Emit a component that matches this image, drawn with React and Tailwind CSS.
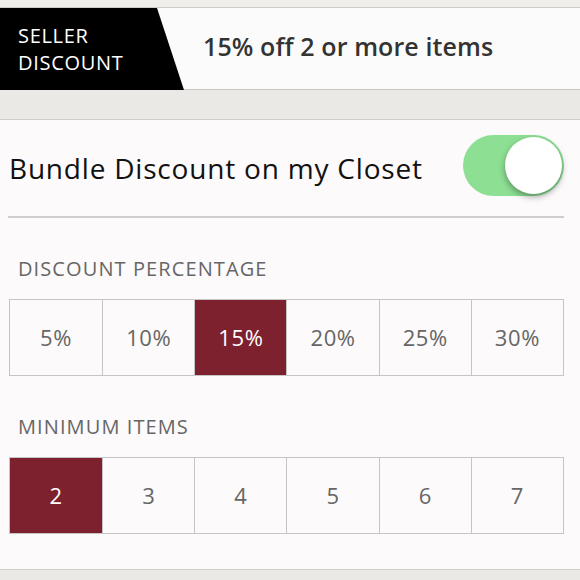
import React, { useState } from 'react';

const percents = ['5%', '10%', '15%', '20%', '25%', '30%'];
const minimums = ['2', '3', '4', '5', '6', '7'];

function OptionRow({ options, selected, onSelect }) {
  return (
    <div className="ml-[9px] mr-[16px] grid grid-cols-6 border border-[#c6c4c4]">
      {options.map((o, i) => (
        <button
          key={o}
          onClick={() => onSelect(o)}
          className={`h-[75px] flex items-center justify-center text-[22px] tracking-[0.6px] ${i > 0 ? 'border-l border-[#c6c4c4]' : ''} ${
            selected === o ? 'bg-[#7d212e] text-white' : 'bg-[#fcfafa] text-[#666]'
          }`}
        >
          {o}
        </button>
      ))}
    </div>
  );
}

export default function App() {
  const [enabled, setEnabled] = useState(true);
  const [percent, setPercent] = useState('15%');
  const [minItems, setMinItems] = useState('2');

  return (
    <div className="w-[580px] h-[580px] overflow-hidden bg-[#ebe9e5] font-['Open_Sans','Lato',sans-serif]">
      <div className="h-[8px] bg-[#f0eeeb] border-b border-[#cfcdca]" />

      <header className="h-[82px] flex bg-[#fcfbfb] border-b border-[#c9c7c4]">
        <div className="relative w-[184px] shrink-0">
          <svg className="absolute inset-0" width="184" height="82" viewBox="0 0 184 82">
            <polygon points="0,0 157,0 184,82 0,82" fill="#000" />
          </svg>
          <div className="relative pl-[18px] pt-[14px] text-white text-[20px] leading-[27px] tracking-[0.7px]">
            <div>SELLER</div>
            <div>DISCOUNT</div>
          </div>
        </div>
        <div className="flex items-center pl-[19px] pb-[4px] text-[25px] font-semibold text-[#333] tracking-[0.1px]">
          15% off 2 or more items
        </div>
      </header>

      <div className="h-[29px]" />

      <section className="h-[451px] bg-[#fcfafa] border-t border-b border-[#cfcdca]">
        <div className="h-[96px] flex items-center justify-between pl-[9px] pr-[16px]">
          <span className="text-[28px] text-[#111] tracking-[0.8px]">Bundle Discount on my Closet</span>
          <button
            onClick={() => setEnabled(!enabled)}
            className={`relative w-[101px] h-[61px] mb-[6px] rounded-full ${enabled ? 'bg-[#8cdf93]' : 'bg-[#e5e5e5]'}`}
          >
            <span
              className={`absolute top-[2px] w-[57px] h-[57px] rounded-full bg-white shadow-[0_3px_6px_rgba(0,0,0,0.35)] ${
                enabled ? 'right-[2px]' : 'left-[2px]'
              }`}
            />
          </button>
        </div>
        <div className="ml-[8px] mr-[16px] border-t-2 border-[#cfcdcd]" />

        <div className="pl-[18px] pt-[40px] pb-[19px] text-[20px] leading-[22px] text-[#666] tracking-[1.1px]">DISCOUNT PERCENTAGE</div>
        <OptionRow options={percents} selected={percent} onSelect={setPercent} />

        <div className="pl-[18px] pt-[40px] pb-[19px] text-[20px] leading-[22px] text-[#666] tracking-[1.1px]">MINIMUM ITEMS</div>
        <OptionRow options={minimums} selected={minItems} onSelect={setMinItems} />
      </section>
    </div>
  );
}
